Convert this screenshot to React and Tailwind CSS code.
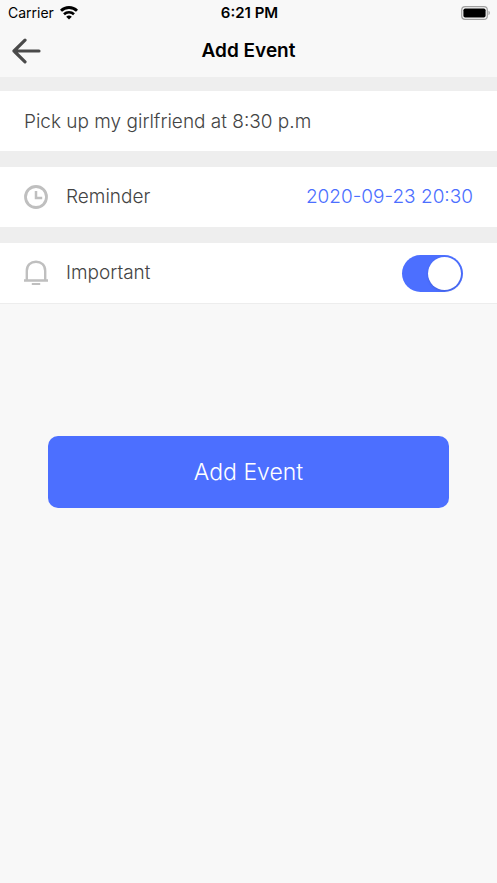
import { useState } from 'react';

function WifiIcon() {
  return (
    <svg width="18" height="14" viewBox="0 0 18 14" fill="none" stroke="#000" aria-hidden="true">
      <path d="M1 4.7a11.6 11.6 0 0 1 16 0" strokeWidth="2.9" />
      <path d="M4 8.3a7.2 7.2 0 0 1 10 0" strokeWidth="2.6" />
      <path d="M9 13.6 6.2 10.8a4 4 0 0 1 5.6 0Z" fill="#000" stroke="none" />
    </svg>
  );
}

function BatteryIcon() {
  return (
    <svg width="30" height="14" viewBox="0 0 30 14" fill="none" aria-hidden="true">
      <rect x="0.7" y="0.7" width="25.6" height="12.6" rx="3.4" stroke="#a0a0a0" strokeWidth="1.2" />
      <rect x="2.4" y="2.4" width="22.2" height="9.2" rx="1.8" fill="#000" />
      <path d="M27.6 4.8c1.4.6 1.4 3.8 0 4.4Z" fill="#808080" />
    </svg>
  );
}

function BackIcon() {
  return (
    <svg
      width="30"
      height="28"
      viewBox="0 0 30 28"
      fill="none"
      stroke="#4a4a4a"
      strokeWidth="3.2"
      strokeLinecap="round"
      strokeLinejoin="round"
      aria-hidden="true"
    >
      <path d="M14 2.2 3 13l11 10.8M3 13h25" />
    </svg>
  );
}

function ClockIcon() {
  return (
    <svg width="24" height="24" viewBox="0 0 24 24" fill="none" stroke="#bfbfbf" strokeWidth="2.8" aria-hidden="true">
      <circle cx="12" cy="12" r="10.5" />
      <path d="M12 6v7h6.2" strokeWidth="2.5" />
    </svg>
  );
}

function BellIcon() {
  return (
    <svg width="24" height="26" viewBox="0 0 24 26" fill="none" stroke="#bfbfbf" strokeWidth="2.4" aria-hidden="true">
      <path d="M0 20.5h24M2.8 20.5V10.7C2.8 5.2 6.7 1.8 12 1.8s9.2 3.4 9.2 8.9v9.8" />
      <path d="M7.8 24h8.4" strokeWidth="2" />
    </svg>
  );
}

export default function App() {
  const [title, setTitle] = useState('Pick up my girlfriend at 8:30 p.m');
  const [important, setImportant] = useState(true);

  return (
    <div className="min-h-screen bg-[#f8f8f8] font-['Inter',sans-serif] text-[#444444]">
      <header className="text-black">
        <div className="grid h-[26px] grid-cols-3 items-center pr-1.5 pl-2 text-sm">
          <div className="flex items-center gap-1.5">
            <span>Carrier</span>
            <WifiIcon />
          </div>
          <span className="text-center text-[15px] font-semibold">6:21 PM</span>
          <div className="flex justify-end">
            <BatteryIcon />
          </div>
        </div>

        <div className="grid h-[51px] grid-cols-[48px_1fr_48px] items-center">
          <button type="button" aria-label="Back" className="flex justify-center pl-1">
            <BackIcon />
          </button>
          <h1 className="text-center text-[19px] font-semibold">Add Event</h1>
        </div>
      </header>

      <form onSubmit={(event) => event.preventDefault()}>
        <div className="flex flex-col gap-4 border-b border-[#ededed] bg-[#eeeeee] pt-3.5 text-[19px] font-light">
          <input
            type="text"
            aria-label="Event"
            value={title}
            onChange={(event) => setTitle(event.target.value)}
            className="h-[60px] w-full bg-white px-6 outline-none"
          />

          <div className="flex h-[60px] items-center bg-white px-6">
            <ClockIcon />
            <span id="reminder-label" className="ml-[18px]">
              Reminder
            </span>
            <button type="button" aria-describedby="reminder-label" className="ml-auto text-[#4c6fff]">
              2020-09-23 20:30
            </button>
          </div>

          <div className="flex h-[60px] items-center bg-white pr-[34px] pl-6">
            <BellIcon />
            <label htmlFor="important" className="ml-[18px]">
              Important
            </label>
            <input
              id="important"
              type="checkbox"
              role="switch"
              checked={important}
              onChange={(event) => setImportant(event.target.checked)}
              className="ml-auto flex h-[37px] w-[61px] appearance-none items-center rounded-full bg-gray-300 px-0.5 before:size-[33px] before:rounded-full before:bg-white before:shadow-sm checked:justify-end checked:bg-[#4c6fff]"
            />
          </div>
        </div>

        <div className="px-12 pt-[132px]">
          <button
            type="submit"
            className="h-[72px] w-full rounded-[10px] bg-[#4c6fff] text-[23px] font-light text-white"
          >
            Add Event
          </button>
        </div>
      </form>
    </div>
  );
}
